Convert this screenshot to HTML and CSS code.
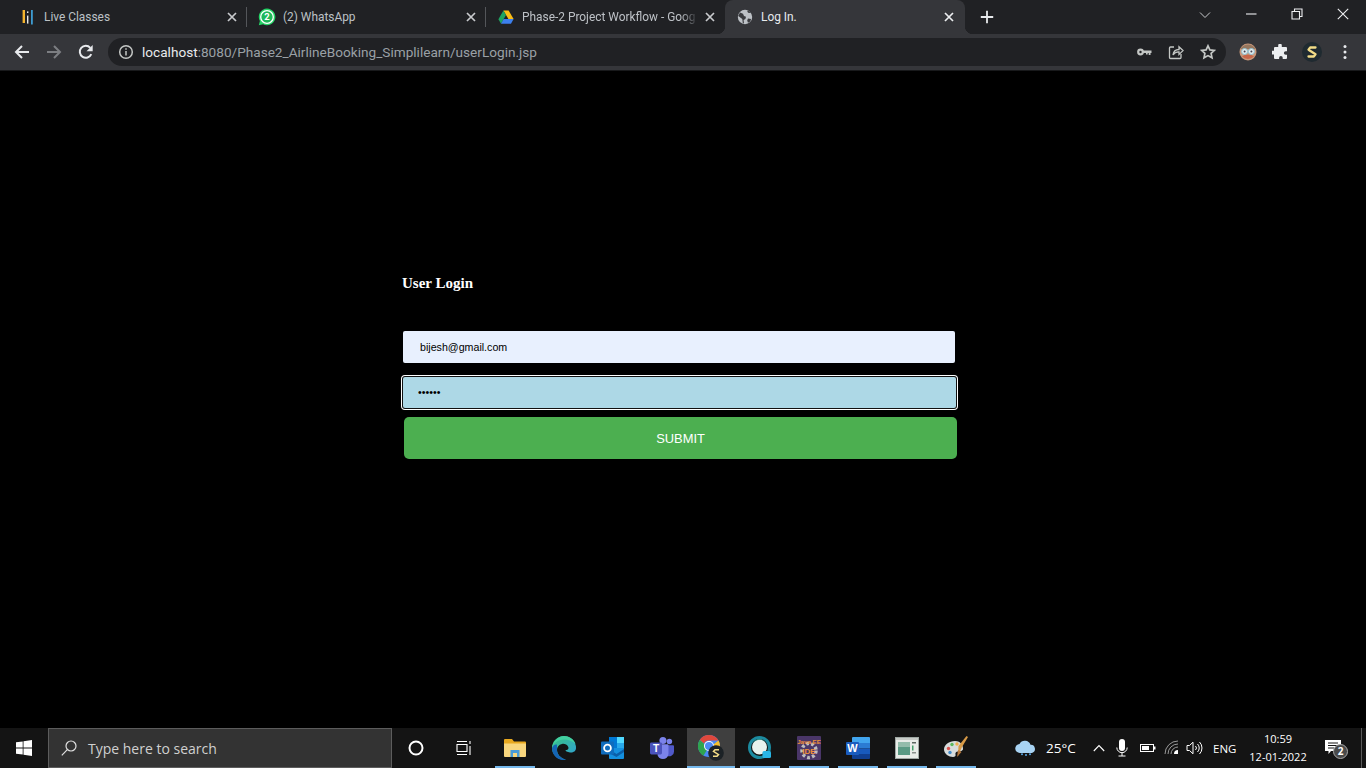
FILE: index.html
```html
<!DOCTYPE html>
<html lang="en">
<head>
<meta charset="utf-8">
<title>Log In.</title>
<link rel="stylesheet" href="styles.css">
</head>
<body>
<div class="screen">
  <div class="tabstrip">
    <div class="tab">
      <svg class="fav" viewBox="0 0 16 16"><rect x="2.600" y="1" width="2.400" height="13" fill="#f4b42e"/><rect x="7" y="2.400" width="1.400" height="1.600" fill="#e8e8e8"/><rect x="7" y="6.600" width="1.400" height="8" fill="#e8e8e8"/><rect x="11" y="1" width="1.800" height="14.500" fill="#3d9bd0"/></svg>
      <span class="label">Live Classes</span>
      <svg class="close" viewBox="0 0 16 16"><path d="M4 4l8 8M12 4l-8 8"/></svg>
    </div>
    <i class="sep"></i>
    <div class="tab">
      <svg class="fav fav-wa" viewBox="0 0 18 18"><path d="M9 .6a8.300 8.300 0 0 0-7.100 12.500L.8 17.300l4.300-1.100A8.300 8.300 0 1 0 9 .6z" fill="#25d366"/><circle cx="9" cy="9" r="6.300" fill="#1fb85a" stroke="#fff" stroke-width="1.300"/><text x="9" y="12.300" class="wa-n">2</text></svg>
      <span class="label">(2) WhatsApp</span>
      <svg class="close" viewBox="0 0 16 16"><path d="M4 4l8 8M12 4l-8 8"/></svg>
    </div>
    <i class="sep"></i>
    <div class="tab">
      <svg class="fav" viewBox="0 0 16 16"><path d="M5.400 1.500h5.200l5 8.600h-5.200z" fill="#f9bc15"/><path d="M5.400 1.500L.4 10.200 3 14.700l5-8.600z" fill="#1ea362"/><path d="M3 14.700h10l2.600-4.600H5.600z" fill="#3c7fed"/></svg>
      <span class="label label-fade">Phase-2 Project Workflow - Goog</span>
      <svg class="close" viewBox="0 0 16 16"><path d="M4 4l8 8M12 4l-8 8"/></svg>
    </div>
    <div class="tab tab-active">
      <svg class="fav" viewBox="0 0 16 16"><circle cx="8" cy="8" r="7.200" fill="#bdc1c6"/><path d="M3 3.500l3 1.200 1 2.300 2 .7-.6 2.400-1.800 1L7 14.500l-1.200-.5-.5-4-3-2.300-1.100-.6zM10 1.600l1 2.200 2.200.2.700-.4a7 7 0 0 0-3.900-2zM11 9.500l3.100.6-.8 2.400-2.300 1.300-.8-2.400z" fill="#3a3b3f"/></svg>
      <span class="label">Log In.</span>
      <svg class="close" viewBox="0 0 16 16"><path d="M4 4l8 8M12 4l-8 8"/></svg>
    </div>
    <svg class="newtab" viewBox="0 0 14 14"><path d="M7 .8v12.400M.8 7h12.400"/></svg>
    <span class="grow"></span>
    <svg class="tabsearch" viewBox="0 0 12 8"><path d="M1 1.500l5 5 5-5"/></svg>
    <span class="win"><svg viewBox="0 0 12 12"><path d="M1 6h10.500"/></svg></span>
    <span class="win"><svg viewBox="0 0 12 12"><path d="M1 3.500h7.500v7.500H1zM3.500 3.500V1H11v7.500H8.500"/></svg></span>
    <span class="win"><svg viewBox="0 0 12 12"><path d="M.8.800l10.400 10.400M11.200.800L.8 11.200"/></svg></span>
  </div>

  <div class="toolbar">
    <span class="navbtn"><svg viewBox="0 0 16 16"><path class="nav" d="M15 8H2M8 2L2 8l6 6"/></svg></span>
    <span class="navbtn"><svg viewBox="0 0 16 16"><path class="nav nav-off" d="M1 8h13M8 2l6 6-6 6"/></svg></span>
    <span class="navbtn"><svg viewBox="0 0 16 16"><path class="nav" d="M13.300 10.200A6 6 0 1 1 12.300 3.800"/><path d="M14.700 1v6.200H8.500z" fill="#e8eaed"/></svg></span>
    <div class="omnibox">
      <svg class="info" viewBox="0 0 16 16"><circle cx="8" cy="8" r="6.300"/><path d="M8 7v4.500M8 4.300v1.500"/></svg>
      <span class="url"><b>localhost</b>:8080/Phase2_AirlineBooking_Simplilearn/userLogin.jsp</span>
      <span class="omni-btn"><svg viewBox="0 0 16 16"><circle cx="4.500" cy="8" r="3.400" fill="#c4c7c5"/><circle cx="4.500" cy="8" r="1.200" fill="#202124"/><path d="M7 6.600h8.500v2.500h-1v2h-1.800v-2h-1v1.500H10V9.100H7z" fill="#c4c7c5"/></svg></span>
      <span class="omni-btn"><svg viewBox="0 0 16 16"><path class="line" d="M6 3H2.500a1 1 0 0 0-1 1v9.500a1 1 0 0 0 1 1H12a1 1 0 0 0 1-1V10"/><path class="line" d="M5 11c.4-3.400 2.600-5.500 6-5.500V2.800l4 3.800-4 3.800V7.800c-2.800-.2-4.600.9-6 3.200z"/></svg></span>
      <span class="omni-btn"><svg viewBox="0 0 16 16"><path class="line line-b" d="M8 1.800l1.900 4.100 4.500.5-3.300 3 .9 4.400L8 11.600l-4 2.200.9-4.400-3.300-3 4.500-.5z"/></svg></span>
    </div>
    <span class="navbtn ext ext-avatar"><svg viewBox="0 0 18 18"><circle cx="9" cy="9" r="8.500" fill="#c9987a"/><path d="M1.500 6a8.500 8.500 0 0 1 15 0z" fill="#95775f"/><path d="M3 13.500a8.500 8.500 0 0 0 12 0l-3-1.800H6z" fill="#c8674a"/><circle cx="5.600" cy="8.500" r="3" fill="#e6eeee" stroke="#8fc3d6"/><circle cx="12.400" cy="8.500" r="3" fill="#e6eeee" stroke="#8fc3d6"/><circle cx="5.600" cy="8.500" r="1" fill="#445"/><circle cx="12.400" cy="8.500" r="1" fill="#445"/></svg></span>
    <span class="navbtn ext"><svg viewBox="0 0 16 16"><path d="M6.200 1.500a1.800 1.800 0 0 1 3.600 0V3H14a1 1 0 0 1 1 1v3.200h-1.300a1.800 1.800 0 0 0 0 3.600H15V14a1 1 0 0 1-1 1h-3.300v-1.200a1.800 1.800 0 0 0-3.600 0V15H3a1 1 0 0 1-1-1v-3.500H.8a1.900 1.900 0 0 1 0-3.800H2V4a1 1 0 0 1 1-1h3.200z" fill="#eceef0"/></svg></span>
    <span class="navbtn ext ext-s"><svg viewBox="0 0 20 20"><circle cx="10" cy="10" r="10" fill="#1f2a30"/><path d="M13.500 5.500H8.200L6.500 7.700 13.500 12.300 11.800 14.500H6.500" fill="none" stroke="#f2dc87" stroke-width="2.300" stroke-linejoin="round" stroke-linecap="round"/></svg></span>
    <span class="navbtn ext ext-dots"><svg viewBox="0 0 4 16"><circle cx="2" cy="2.500" r="1.500" fill="#e8eaed"/><circle cx="2" cy="8" r="1.500" fill="#e8eaed"/><circle cx="2" cy="13.500" r="1.500" fill="#e8eaed"/></svg></span>
  </div>

  <main class="page">
    <form class="login">
      <h4 class="login-title">User Login</h4>
      <input class="field field-email" type="text" value="bijesh@gmail.com" aria-label="Email">
      <input class="field field-pass" type="password" value="123456" aria-label="Password">
      <button class="submit" type="button">SUBMIT</button>
    </form>
  </main>

  <div class="taskbar">
    <span class="start"><svg viewBox="0 0 16 16"><path d="M0 2.300L6.700 1.400V7.600H0zM7.500 1.300L16 0V7.600H7.500zM0 8.400H6.700V14.600L0 13.700zM7.500 8.400H16V16L7.500 14.700z" fill="#fff"/></svg></span>
    <div class="search">
      <svg viewBox="0 0 16 16"><circle cx="10" cy="6" r="5"/><path d="M6.300 9.700L.8 15.300"/></svg>
      <span>Type here to search</span>
    </div>
    <span class="tb-sys"><svg class="cortana" viewBox="0 0 16 16"><circle cx="8" cy="8" r="6.500"/></svg></span>
    <span class="tb-sys"><svg class="taskview" viewBox="0 0 16 16"><path d="M1 1.500h10M1 14.500h10M1 4.500h10v7H1zM14 1v3M14 6v9"/></svg></span>
    <span class="app app-on app-first"><svg class="ic-folder" viewBox="0 0 22 18"><path d="M0 1a1 1 0 0 1 1-1h7l2 2.500h11a1 1 0 0 1 1 1V5H0z" fill="#e9a91f"/><path d="M0 4.500h22V17a1 1 0 0 1-1 1H1a1 1 0 0 1-1-1z" fill="#f9d77e"/><path d="M6.500 11h9v7h-2.500v-4H9v4H6.500z" fill="#4a9bd8"/></svg></span>
    <span class="app"><svg viewBox="0 0 24 24"><defs><linearGradient id="eg" x1="0" y1="0" x2="1" y2="1"><stop offset="0" stop-color="#39c481"/><stop offset="1" stop-color="#2f9fd8"/></linearGradient></defs><path d="M12 0A12 12 0 0 1 24 12c0 3-2.500 4.500-5 4.500-2.500 0-5.500-1-5.500-2.500 3 0 3.500-2 2.500-3.500C15 8.500 12.500 7.500 10 8 6.500 8.700 5 11 5 14c0 4 3.500 8.500 9 9.500A12 12 0 0 1 0 12 12 12 0 0 1 12 0z" fill="url(#eg)"/><path d="M0 12C1 4.500 7 0 12 0c5 0 10 3 11.500 8-3-3-7-4.500-11.500-4.500C6 3.500 1.500 7 0 12z" fill="#42d0a0"/><path d="M5 14c0 4 3.500 8.500 9 9.500-7 2-14-3.500-14-11.500C1.500 9 3.500 8 5 8.800 5 10 5 12 5 14z" fill="#1565b5"/></svg></span>
    <span class="app"><svg viewBox="0 0 24 24"><path d="M8 1h14a1 1 0 0 1 1 1v10H8z" fill="#28a8ea"/><rect x="8" y="1" width="8" height="6" fill="#0078d4"/><rect x="16" y="1" width="7" height="6" fill="#50d9ff"/><rect x="8" y="7" width="8" height="6" fill="#0078d4"/><path d="M8 12h15v10a1 1 0 0 1-1 1H9a1 1 0 0 1-1-1z" fill="#1490df"/><path d="M8 13l7.500 5L23 13v3l-7.500 5L8 17z" fill="#0a5ea8"/><rect x="0" y="5.500" width="13" height="13" rx="1" fill="#0f6cbd"/><circle cx="6.500" cy="12" r="3.400" fill="none" stroke="#fff" stroke-width="1.800"/></svg></span>
    <span class="app"><svg viewBox="0 0 26 24"><circle cx="21" cy="5" r="3" fill="#7b83eb"/><circle cx="14" cy="4" r="3.800" fill="#7b83eb"/><path d="M17 9h8a1 1 0 0 1 1 1v6a5 5 0 0 1-8 4z" fill="#5059c9"/><path d="M8 8h11a1 1 0 0 1 1 1v9a6 6 0 0 1-12 0z" fill="#7b83eb"/><rect x="0" y="6" width="13" height="13" rx="1.500" fill="#4b53bc"/><text x="6.500" y="16.300" class="ic-text ic-t">T</text></svg></span>
    <span class="app app-on app-active"><svg class="ic-chrome" viewBox="0 0 26 26"><circle cx="11" cy="11" r="11" fill="#4a8af4"/><path d="M11 0a11 11 0 0 1 9.500 5.500H11a5.500 5.500 0 0 0-5 3.200L1.700 5A11 11 0 0 1 11 0z" fill="#e0483c"/><path d="M1.700 5L6 8.700 8.500 15.800 5.600 20.600A11 11 0 0 1 1.700 5z" fill="#2fa44f"/><path d="M20.500 5.500A11 11 0 0 1 11 22l4-7 1-6z" fill="#f6c02d"/><circle cx="11" cy="11" r="5" fill="#fff"/><circle cx="11" cy="11" r="4" fill="#4a8af4"/><circle cx="18" cy="18" r="7.800" fill="#1c2226"/><path d="M21 14.800h-4l-1.500 1.600 5 3.200-1.500 1.600h-4" fill="none" stroke="#f2dc87" stroke-width="1.500"/></svg></span>
    <span class="app app-on"><svg viewBox="0 0 24 24"><circle cx="11.500" cy="11.500" r="10" fill="none" stroke="#1c8ba0" stroke-width="3"/><circle cx="11.500" cy="11" r="7.500" fill="#e8f3ee"/><path d="M5 7a8 8 0 0 1 12-1 7 7 0 0 0-12 1z" fill="#2aa79a"/><rect x="14.500" y="15" width="8.500" height="7" rx="1.500" fill="#29b6e6"/></svg></span>
    <span class="app app-on"><svg viewBox="0 0 24 24"><rect width="24" height="24" rx="1" fill="#4a3668"/><circle cx="12" cy="14.500" r="7" fill="none" stroke="#bdbdbd" stroke-width="3.500" stroke-dasharray="2.800 2.200"/><circle cx="12" cy="14.500" r="5" fill="#4a3668"/><text x="12" y="8" class="ic-text ic-java">Java EE</text><text x="12" y="17.500" class="ic-text ic-ide">IDE</text></svg></span>
    <span class="app app-on"><svg viewBox="0 0 24 24"><path d="M7 1h16a1 1 0 0 1 1 1v5H6V2a1 1 0 0 1 1-1z" fill="#41a5ee"/><rect x="6" y="7" width="18" height="5.500" fill="#2b7cd3"/><rect x="6" y="12.500" width="18" height="5.500" fill="#185abd"/><path d="M6 18h18v4a1 1 0 0 1-1 1H7a1 1 0 0 1-1-1z" fill="#103f91"/><rect x="0" y="6" width="13" height="13" rx="1" fill="#1a5cbe"/><text x="6.500" y="16.300" class="ic-text ic-w">W</text></svg></span>
    <span class="app app-on"><svg viewBox="0 0 24 22"><rect x=".5" y=".5" width="23" height="21" fill="#e8ece8" stroke="#9fa8a4"/><rect x="1" y="1" width="22" height="2" fill="#c8ccc8"/><rect x="3" y="5" width="12" height="13" fill="#5a9a84"/><rect x="3" y="5" width="12" height="5" fill="#93bcab"/><rect x="17" y="5" width="4" height="1.500" fill="#5a6660"/><rect x="17" y="8.500" width="1.500" height="5" fill="#43a06a"/><rect x="17" y="15" width="4" height="1.500" fill="#8a908c"/></svg></span>
    <span class="app app-on"><svg viewBox="0 0 24 24"><path d="M11 5C5 5 0 9 0 13.500S5 21 9 21c2 0 3-1 2.500-2.500s.5-3 2.500-3 4-.2 5-2c.5-3.500-2-8.500-8-8.500z" fill="#d8dcdc"/><circle cx="4.500" cy="12.500" r="1.700" fill="#d9534f"/><circle cx="8" cy="8.500" r="1.700" fill="#5cb85c"/><circle cx="13" cy="8" r="1.700" fill="#f0ad4e"/><circle cx="6" cy="16.500" r="1.700" fill="#428bca"/><path d="M22.500 0l1.500 1-6 10-4 9 .5-10z" fill="#d79a47"/><path d="M13 21l1-7 3.500 2z" fill="#b5763a"/></svg></span>
    <span class="grow"></span>
    <div class="tray">
      <svg class="cloud" viewBox="0 0 22 16"><path d="M5 13a4.500 4.500 0 0 1-.5-9 6 6 0 0 1 11 .8A4.200 4.200 0 0 1 17 13z" fill="#a8d3f3"/><circle cx="7" cy="14.300" r="1" fill="#5aa8e6"/><circle cx="11" cy="15" r="1" fill="#5aa8e6"/><circle cx="15" cy="14.300" r="1" fill="#5aa8e6"/></svg>
      <span class="temp">25°C</span>
      <svg class="t-chev" viewBox="0 0 12 8"><path d="M.8 7L6 1.500 11.200 7"/></svg>
      <svg class="t-mic" viewBox="0 0 12 18"><rect x="3" y="0" width="6" height="12" rx="3" fill="#fff"/><path class="t-line" d="M.8 8.500a5.200 5.200 0 0 0 10.400 0M6 13.700V17M2.500 17h7"/></svg>
      <svg class="t-batt" viewBox="0 0 16 10"><rect x=".5" y="1.500" width="13" height="7" fill="none" stroke="#fff"/><rect x="2" y="3" width="7" height="4" fill="#fff"/><rect x="14" y="3.500" width="1.500" height="3" fill="#fff"/></svg>
      <svg class="t-wifi" viewBox="0 0 16 16"><path class="t-line t-dim" d="M1 14A13 13 0 0 1 14 1M4 14A10 10 0 0 1 14 4M7 14A7 7 0 0 1 14 7"/><path d="M10 14a4 4 0 0 1 4-4v4z" fill="#fff"/></svg>
      <svg class="t-vol" viewBox="0 0 17 14"><path class="t-line" d="M1 4.500h2.500L7 1.200v11.600L3.500 9.500H1zM9.500 5a2.800 2.800 0 0 1 0 4M11.500 3a5.500 5.500 0 0 1 0 8M13.500 1a8.500 8.500 0 0 1 0 12"/></svg>
      <span class="lang">ENG</span>
      <span class="clock"><span>10:59</span><span>12-01-2022</span></span>
      <span class="notif"><svg viewBox="0 0 16 14"><path d="M0 0h16v11H6l-2.500 3v-3H0z" fill="#fff"/><path d="M3 3h10M3 5.500h10M3 8h6" stroke="#141414"/></svg><span class="notif-n">2</span></span>
      <i class="showdesk"></i>
    </div>
  </div>
</div>
</body>
</html>
```
FILE: styles.css
```css
* { box-sizing: border-box; }
html, body { margin: 0; padding: 0; background: #000; }
.screen { width: 1366px; height: 768px; display: flex; flex-direction: column; overflow: hidden; font-family: Roboto, "Liberation Sans", sans-serif; }
svg { display: block; flex: none; }
.grow { flex: 1; }

/* tab strip */
.tabstrip { height: 34px; flex: none; background: #202124; display: flex; align-items: stretch; padding-left: 8px; }
.tab { width: 238px; display: flex; align-items: center; padding: 0 6px 1px 12px; color: #bdc1c6; font-size: 11.9px; }
.sep { width: 1px; height: 20px; margin: 7px 0; background: #54565a; flex: none; }
.fav { width: 16px; height: 16px; margin-right: 8px; }
.fav-wa { width: 18px; height: 18px; margin: 0 7px 0 -1px; }
.label { flex: 1; white-space: nowrap; overflow: hidden; }
.label-fade { -webkit-mask-image: linear-gradient(90deg, #000 88%, transparent 98%); mask-image: linear-gradient(90deg, #000 88%, transparent 98%); }
.close { width: 16px; height: 16px; fill: none; stroke: #c8cacd; stroke-width: 1.700; }
.tab-active { position: relative; width: 240px; margin-left: 1px; background: #35363a; border-radius: 8px 8px 0 0; color: #e8eaed; padding-right: 8px; }
.tab-active .close { stroke: #eceef0; }
.tab-active::before, .tab-active::after { content: ""; position: absolute; bottom: 0; width: 8px; height: 8px; }
.tab-active::before { left: -8px; background: radial-gradient(circle at 0 0, transparent 8px, #35363a 8.500px); }
.tab-active::after { right: -8px; background: radial-gradient(circle at 100% 0, transparent 8px, #35363a 8.500px); }
.wa-n { font: 700 9.500px Roboto, sans-serif; fill: #fff; text-anchor: middle; }
.newtab { width: 14px; height: 14px; margin: 10px 0 0 15px; fill: none; stroke: #e8eaed; stroke-width: 1.800; }
.tabsearch { width: 12px; height: 8px; margin: 11px 17px 0 0; fill: none; stroke: #c8cacd; stroke-width: 1; }
.win { width: 46px; display: flex; align-items: center; justify-content: center; padding-bottom: 6px; }
.win svg { width: 12px; height: 12px; fill: none; stroke: #eef0f2; stroke-width: 1.100; }

/* toolbar */
.toolbar { height: 37px; flex: none; background: #35363a; border-bottom: 1px solid #18191b; display: flex; align-items: center; padding: 0 0 0 6px; }
.navbtn { width: 32px; height: 28px; display: flex; align-items: center; justify-content: center; flex: none; }
.navbtn svg { width: 16px; height: 16px; }
.nav { fill: none; stroke: #e8eaed; stroke-width: 2; }
.nav-off { stroke: #7c7e82; }
.omnibox { width: 1118px; height: 28px; margin: 0 6px; background: #202124; border-radius: 14px; display: flex; align-items: center; padding: 0 2px 0 10px; }
.info { width: 16px; height: 16px; margin-right: 8px; fill: none; stroke: #c4c7c5; stroke-width: 1.500; }
.url { flex: 1; font-size: 13.620px; color: #9aa0a6; white-space: nowrap; }
.url b { font-weight: 400; color: #e8eaed; }
.omni-btn { width: 32px; display: flex; justify-content: center; }
.omni-btn svg { width: 16px; height: 16px; }
.line { fill: none; stroke: #c4c7c5; stroke-width: 1.300; }
.line-b { stroke-width: 1.700; }
.navbtn.ext-avatar svg { width: 18px; height: 18px; }
.navbtn.ext-s svg { width: 20px; height: 20px; }
.ext-dots { margin-left: 1px; }
.navbtn.ext-dots svg { width: 4px; }

/* page */
.page { flex: 1; min-height: 0; background: #000; padding: 204px 0 0 402px; }
.login { width: 560px; display: flex; flex-direction: column; align-items: flex-start; }
.login-title { margin: 0 0 40px; font: 700 15px/16px "Liberation Serif", serif; color: #fff; }
.field { display: block; width: 552px; margin-left: 1px; border: 0; border-radius: 2px; color: #000; font: 10.670px "Liberation Sans", Arial, sans-serif; outline: 0; }
.field-email { height: 32px; padding: 0 17px; background: #e8f0fe; margin-bottom: 14px; }
.field-pass { width: 553px; height: 31px; padding: 0 15px 2px; background: #add8e6; margin-bottom: 9px; box-shadow: 0 0 0 1px #101010, 0 0 0 2px #fff; }
.submit { width: 553px; height: 42px; margin-left: 2px; border: 0; border-radius: 5px; background: #4caf50; color: #fff; font: 12.900px "Liberation Sans", Arial, sans-serif; }

/* taskbar */
.taskbar { height: 40px; flex: none; background: #141414; display: flex; align-items: stretch; color: #fff; font-family: "Open Sans", sans-serif; }
.start { width: 48px; display: flex; align-items: center; justify-content: center; }
.start svg { width: 16px; height: 16px; }
.search { width: 344px; background: #333; border: 1px solid #5c5c5c; display: flex; align-items: center; padding-left: 12px; color: #d0d0d0; font-size: 14px; }
.search svg { width: 16px; height: 16px; margin-right: 11px; fill: none; stroke: #e0e0e0; stroke-width: 1.200; }
.tb-sys { width: 48px; display: flex; align-items: center; justify-content: center; }
.cortana { width: 16px; height: 16px; fill: none; stroke: #fff; stroke-width: 2; }
.taskview { width: 16px; height: 16px; fill: none; stroke: #fff; stroke-width: 1.100; }
.app { width: 49px; display: flex; align-items: center; justify-content: center; position: relative; padding-bottom: 1px; }
.app-first { margin-left: 2px; }
.app svg { width: 24px; height: 24px; }
.app svg.ic-folder { width: 22px; height: 18px; }
.app svg.ic-chrome { width: 26px; height: 26px; }
.app-on::after { content: ""; position: absolute; left: 5px; right: 4px; bottom: 0; height: 2px; background: #76b9ed; }
.app-active { width: 48px; margin-left: 1px; background: #3f3f3f; }
.app-active::after { left: 0; right: 0; }
.ic-text { font-family: "Liberation Sans", sans-serif; font-weight: 700; text-anchor: middle; }
.ic-t, .ic-w { font-size: 11px; fill: #fff; }
.ic-java { font-size: 6.200px; fill: #f0913a; }
.ic-ide { font-size: 8px; fill: #f0913a; }
.tray { display: flex; align-items: center; font-size: 12px; color: #fff; }
.cloud { width: 22px; height: 16px; margin-right: 9px; }
.temp { font-size: 13.500px; margin-right: 17px; width: 30px; white-space: nowrap; }
.t-chev { width: 12px; height: 8px; margin-right: 11px; fill: none; stroke: #fff; stroke-width: 1.100; }
.t-mic { width: 12px; height: 18px; margin-right: 12px; }
.t-line { fill: none; stroke: #fff; stroke-width: 1; }
.t-dim { stroke: #9a9a9a; }
.t-batt { width: 16px; height: 10px; margin-right: 8px; }
.t-wifi { width: 16px; height: 16px; margin-right: 6px; }
.t-vol { width: 17px; height: 14px; margin-right: 10px; }
.lang { font-size: 11.500px; width: 24px; white-space: nowrap; margin-right: 9px; }
.clock { display: flex; flex-direction: column; align-items: center; width: 64px; font-size: 11px; line-height: 18px; white-space: nowrap; margin-right: 15px; }
.notif { position: relative; width: 24px; height: 24px; margin-right: 12px; padding-top: 4px; }
.notif svg { width: 16px; height: 14px; }
.notif-n { position: absolute; left: 8px; top: 8px; width: 15px; height: 15px; border-radius: 50%; background: #4a4a4a; border: 1px solid #aaa; font-size: 10px; font-weight: 700; line-height: 13px; text-align: center; }
.showdesk { width: 1px; height: 40px; margin-right: 4px; background: #5a5a5a; }
```
